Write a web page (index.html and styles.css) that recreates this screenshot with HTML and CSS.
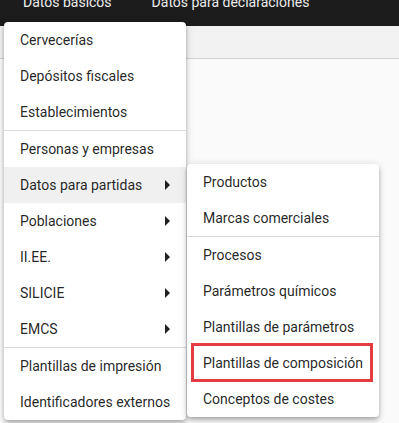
FILE: index.html
```html
<!DOCTYPE html>
<html lang="es">
<head>
<meta charset="utf-8">
<link rel="stylesheet" href="styles.css">
</head>
<body>
<header class="topbar">
  <nav class="topnav">
    <span class="topnav-item">Datos básicos</span>
    <span class="topnav-item">Datos para declaraciones</span>
  </nav>
</header>
<div class="toolbar"></div>
<main class="content"></main>

<div class="menu menu-main">
  <div class="menu-item">Cervecerías</div>
  <div class="menu-item">Depósitos fiscales</div>
  <div class="menu-item">Establecimientos</div>
  <div class="menu-divider"></div>
  <div class="menu-item">Personas y empresas</div>
  <div class="menu-item sub active">Datos para partidas</div>
  <div class="menu-item sub">Poblaciones</div>
  <div class="menu-item sub">II.EE.</div>
  <div class="menu-item sub">SILICIE</div>
  <div class="menu-item sub">EMCS</div>
  <div class="menu-divider"></div>
  <div class="menu-item">Plantillas de impresión</div>
  <div class="menu-item">Identificadores externos</div>
</div>

<div class="menu menu-sub">
  <div class="menu-item">Productos</div>
  <div class="menu-item">Marcas comerciales</div>
  <div class="menu-divider"></div>
  <div class="menu-item">Procesos</div>
  <div class="menu-item">Parámetros químicos</div>
  <div class="menu-item">Plantillas de parámetros</div>
  <div class="menu-item marked">Plantillas de composición</div>
  <div class="menu-item">Conceptos de costes</div>
</div>
</body>
</html>
```
FILE: styles.css
```css
html, body {
  margin: 0;
  padding: 0;
}
body {
  width: 399px;
  height: 423px;
  overflow: hidden;
  position: relative;
  font-family: Roboto, "Liberation Sans", sans-serif;
  background: #fafafa;
}
.topbar {
  height: 26px;
  background: #1c1c1d;
  overflow: hidden;
}
.topnav {
  display: flex;
  gap: 40px;
  padding-left: 23px;
  margin-top: -8px;
}
.topnav-item {
  color: #ececec;
  font-size: 14px;
  line-height: 20px;
}
.toolbar {
  height: 32px;
  background: #f2f2f2;
  border-bottom: 1px solid #d2d2d2;
}
.content {
  height: 364px;
  background: #fafafa;
}
.menu {
  position: absolute;
  background: #fff;
  border-radius: 4px;
  box-shadow: 0 2px 4px -1px rgba(0,0,0,0.2), 0 4px 5px 0 rgba(0,0,0,0.14), 0 1px 10px 0 rgba(0,0,0,0.12);
}
.menu-main {
  left: 4px;
  top: 22px;
  width: 182px;
}
.menu-sub {
  left: 187px;
  top: 164px;
  width: 192px;
}
.menu-item {
  position: relative;
  height: 36px;
  line-height: 36px;
  padding: 0 16px;
  font-size: 14px;
  color: rgba(0,0,0,0.87);
  white-space: nowrap;
}
.menu-item.active {
  background: #f0f0f0;
}
.menu-item.sub::after {
  content: "";
  position: absolute;
  right: 16px;
  top: 50%;
  margin-top: -5px;
  border-style: solid;
  border-width: 5px 0 5px 5px;
  border-color: transparent transparent transparent rgba(0,0,0,0.87);
}
.menu-item.marked::before {
  content: "";
  position: absolute;
  left: 4px;
  right: 6px;
  top: -2px;
  bottom: -1px;
  border: 3px solid #e53c41;
}
.menu-divider {
  height: 1px;
  background: #d9d9d9;
}
```
